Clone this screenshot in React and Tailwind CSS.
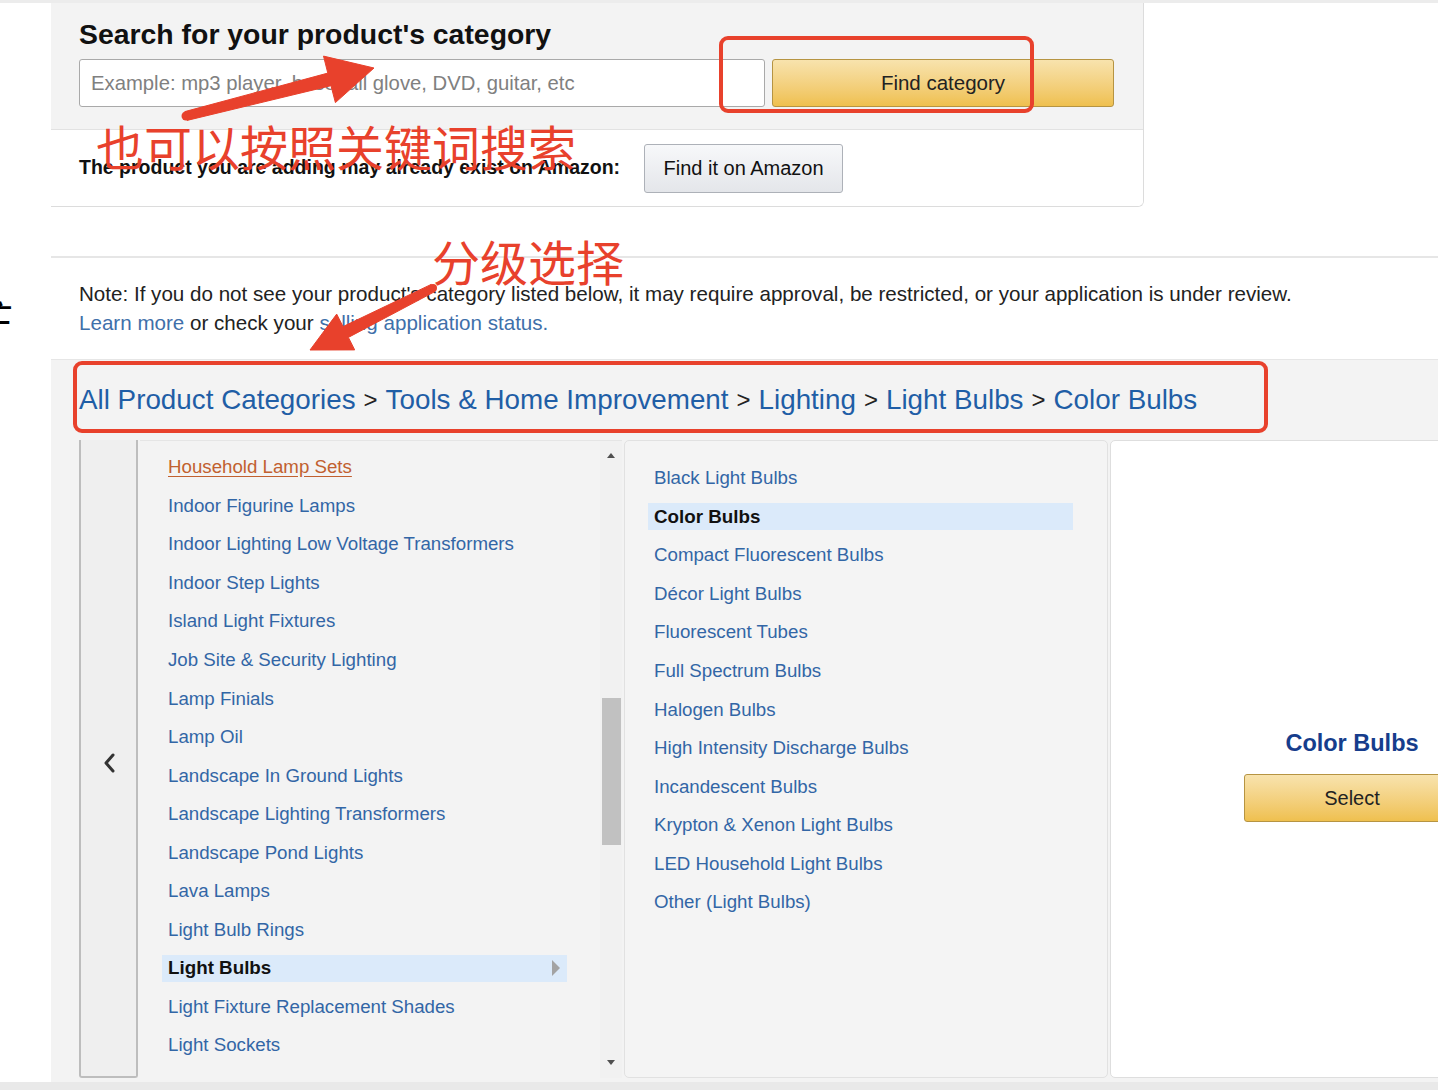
import React from "react";

const col1 = [
  "Household Lamp Sets",
  "Indoor Figurine Lamps",
  "Indoor Lighting Low Voltage Transformers",
  "Indoor Step Lights",
  "Island Light Fixtures",
  "Job Site & Security Lighting",
  "Lamp Finials",
  "Lamp Oil",
  "Landscape In Ground Lights",
  "Landscape Lighting Transformers",
  "Landscape Pond Lights",
  "Lava Lamps",
  "Light Bulb Rings",
  "Light Bulbs",
  "Light Fixture Replacement Shades",
  "Light Sockets",
];

const col2 = [
  "Black Light Bulbs",
  "Color Bulbs",
  "Compact Fluorescent Bulbs",
  "Décor Light Bulbs",
  "Fluorescent Tubes",
  "Full Spectrum Bulbs",
  "Halogen Bulbs",
  "High Intensity Discharge Bulbs",
  "Incandescent Bulbs",
  "Krypton & Xenon Light Bulbs",
  "LED Household Light Bulbs",
  "Other (Light Bulbs)",
];

const crumbs = ["All Product Categories", "Tools & Home Improvement", "Lighting", "Light Bulbs", "Color Bulbs"];

// annotation arrow: tapered shaft + triangular head
function arrow(tail, tip, tailW, neckW, headLen, headW) {
  const dx = tip[0] - tail[0];
  const dy = tip[1] - tail[1];
  const len = Math.hypot(dx, dy);
  const ux = dx / len, uy = dy / len;
  const nx = -uy, ny = ux;
  const neck = [tip[0] - ux * headLen, tip[1] - uy * headLen];
  const p = (b, w) => `${(b[0] + nx * w).toFixed(1)},${(b[1] + ny * w).toFixed(1)}`;
  return [
    p(tail, tailW / 2),
    p(neck, neckW / 2),
    p(neck, headW / 2),
    `${tip[0]},${tip[1]}`,
    p(neck, -headW / 2),
    p(neck, -neckW / 2),
    p(tail, -tailW / 2),
  ].join(" ");
}

function ListRow({ text, selected, visited, wide }) {
  return (
    <div className="h-[38.55px] flex items-center">
      {selected ? (
        <div className={`h-[27px] flex items-center justify-between bg-[#dbeafa] -ml-[6px] pl-[6px] pr-[6px] ${wide ? "w-[425px]" : "w-[405px]"}`}>
          <span className="font-bold text-[#111] text-[18.8px]">{text}</span>
          {!wide && (
            <svg width="10" height="18" viewBox="0 0 10 18">
              <path d="M1 1 L9 9 L1 17 Z" fill="#a3a3a3" />
            </svg>
          )}
        </div>
      ) : visited ? (
        <span className="text-[18.7px] text-[#c1602f] underline underline-offset-[3px] decoration-[#c1602f]">{text}</span>
      ) : (
        <span className="text-[18.7px] text-[#3266a6]">{text}</span>
      )}
    </div>
  );
}

export default function App() {
  return (
    <div className="relative w-[1438px] h-[1090px] overflow-hidden bg-white font-['Liberation_Sans',Arial,sans-serif] text-[#111]">
      <div className="h-[3px] bg-[#ececec]" />

      {/* search panel */}
      <div className="flex">
        <div className="w-[51px] shrink-0" />
        <div className="w-[1093px] border-r border-b border-[#dcdcdc] rounded-br-[6px] overflow-hidden">
          <div className="h-[127px] bg-[#f3f3f3] px-[28px] pt-[15px] border-b border-[#e2e2e2]">
            <h1 className="text-[28.4px] leading-[32px] font-bold text-[#111]">Search for your product's category</h1>
            <div className="flex gap-[7px] mt-[9px]">
              <div className="w-[686px] h-[48px] bg-white border border-[#a9a9a9] rounded-[3px] flex items-center px-[11px] text-[20.3px] text-[#808080]">
                Example: mp3 player, baseball glove, DVD, guitar, etc
              </div>
              <button className="w-[342px] h-[48px] rounded-[3px] border border-[#b69442] bg-gradient-to-b from-[#f8e3ad] to-[#efc04e] text-[20.5px] text-[#222] flex items-center justify-center">
                Find category
              </button>
            </div>
          </div>
          <div className="h-[76px] bg-white flex items-center px-[28px]">
            <span className="text-[19.5px] font-bold text-[#111] pb-[1px]">The product you are adding may already exist on Amazon:</span>
            <button className="ml-[24px] w-[199px] h-[49px] rounded-[3px] border border-[#adb1b8] bg-gradient-to-b from-[#f7f8fa] to-[#e4e6ea] text-[20px] text-[#111] flex items-center justify-center">
              Find it on Amazon
            </button>
          </div>
        </div>
      </div>

      {/* category browser */}
      <div className="flex mt-[49px]">
        <div className="w-[51px] shrink-0 flex flex-col">
          <div className="h-[44px]" />
          <div className="w-[12px] h-[24px] overflow-hidden">
            <span className="block -ml-[12px] text-[24px] leading-[24px] font-['Noto_Sans_CJK_SC',sans-serif] font-bold text-black">亡</span>
          </div>
        </div>
        <div className="flex-1 border-t-2 border-[#e6e6e6]">
          <div className="h-[101px] px-[28px] pt-[21px] text-[20.6px] leading-[29px] text-[#222]">
            <p>Note: If you do not see your product's category listed below, it may require approval, be restricted, or your application is under review.</p>
            <p>
              <span className="text-[#3f70aa]">Learn more</span> or check your{" "}
              <span className="text-[#3f70aa]">selling application status.</span>
            </p>
          </div>
          <div className="bg-[#f3f3f3] border-t border-[#e6e6e6]">
            <div className="h-[80px] flex items-center px-[28px] text-[27.8px]">
              {crumbs.map((c, i) => (
                <React.Fragment key={c}>
                  {i > 0 && <span className="text-[#222] mx-[8px] text-[24px]">&gt;</span>}
                  <span className="text-[#1f5ea6]">{c}</span>
                </React.Fragment>
              ))}
            </div>
            <div className="flex pl-[28px] h-[638px]">
              <div className="w-[59px] shrink-0 bg-[#efefef] border-x-2 border-b-2 border-[#bdbdbd] rounded-b-[3px] flex items-center justify-center">
                <svg width="14" height="22" viewBox="0 0 14 22" className="mt-[10px]">
                  <path d="M11 3 L4 11 L11 19" fill="none" stroke="#333" strokeWidth="3" strokeLinecap="round" strokeLinejoin="round" />
                </svg>
              </div>
              <div className="w-[482px] shrink-0 ml-[2px] flex bg-[#f3f3f3] border-t border-[#e5e5e5]">
                <div className="flex-1 pl-[28px] pt-[7px]">
                  {col1.map((t, i) => (
                    <ListRow key={t} text={t} visited={i === 0} selected={t === "Light Bulbs"} />
                  ))}
                </div>
                <div className="w-[22px] shrink-0 flex flex-col items-center bg-[#f1f1f1]">
                  <svg width="12" height="30" viewBox="0 0 12 30">
                    <path d="M2 17 L6 12 L10 17 Z" fill="#505050" />
                  </svg>
                  <div className="h-[227px]" />
                  <div className="w-[19px] h-[147px] bg-[#c1c1c1]" />
                  <div className="flex-1" />
                  <svg width="12" height="30" viewBox="0 0 12 30">
                    <path d="M2 12 L6 17 L10 12 Z" fill="#505050" />
                  </svg>
                </div>
              </div>
              <div className="w-[484px] shrink-0 ml-[2px] bg-[#f4f4f4] border border-[#e1e1e1] rounded-[5px] pl-[29px] pt-[18px]">
                {col2.map((t) => (
                  <ListRow key={t} text={t} selected={t === "Color Bulbs"} wide />
                ))}
              </div>
              <div className="w-[484px] shrink-0 ml-[2px] bg-white border border-[#dedede] rounded-[5px] flex flex-col items-center pt-[288px]">
                <div className="text-[23.5px] leading-[28px] font-bold text-[#163d8c]">Color Bulbs</div>
                <button className="mt-[17px] w-[216px] h-[48px] rounded-[3px] border border-[#b69442] bg-gradient-to-b from-[#f8e3ad] to-[#efc04e] text-[20px] text-[#222] flex items-center justify-center">
                  Select
                </button>
              </div>
            </div>
            <div className="h-[4px]" />
          </div>
        </div>
      </div>
      <div className="h-[8px] bg-[#e9e9e9]" />

      {/* red annotations */}
      <div className="absolute left-[719px] top-[36px] w-[315px] h-[77px] border-[4px] border-[#e8412c] rounded-[9px]" />
      <div className="absolute left-[73px] top-[361px] w-[1195px] h-[72px] border-[4px] border-[#e8412c] rounded-[9px]" />
      <div className="absolute left-[96px] top-[120px] text-[48px] leading-[50px] text-[#e8412c] font-['Noto_Sans_CJK_SC',sans-serif]">
        也可以按照关键词搜索
      </div>
      <div className="absolute left-[432px] top-[235px] text-[48px] leading-[50px] text-[#e8412c] font-['Noto_Sans_CJK_SC',sans-serif]">
        分级选择
      </div>
      <svg className="absolute left-0 top-0 pointer-events-none" width="1438" height="1090">
        <polygon points={arrow([186, 116], [374, 68], 9, 13, 46, 48)} fill="#e8412c" strokeLinejoin="round" stroke="#e8412c" strokeWidth="1" />
        <circle cx="186" cy="116" r="4.5" fill="#e8412c" />
        <polygon points={arrow([433, 288], [310, 350], 8, 12, 40, 40)} fill="#e8412c" stroke="#e8412c" strokeWidth="1" />
        <circle cx="433" cy="288" r="4" fill="#e8412c" />
      </svg>
    </div>
  );
}
